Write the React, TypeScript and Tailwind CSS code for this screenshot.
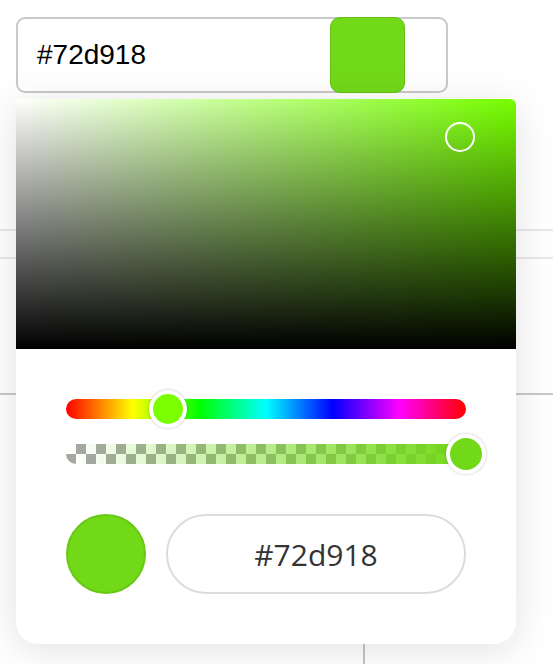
import { useState } from "react";

// Hue slider / alpha slider values for #72d918
const HUE_THUMB_LEFT = 83;

function ColorPopover({ color }: { color: string }) {
  return (
    <div className="absolute left-[16px] top-[99px] w-[500px] h-[545px] bg-white rounded-b-[22px] rounded-tr-[6px] shadow-[0_6px_40px_rgba(0,0,0,0.12)]">
      {/* saturation / value area */}
      <div className="relative h-[250px] rounded-tr-[6px] [background:linear-gradient(to_top,#000,transparent),linear-gradient(to_right,#fff,#77ff00)]">
        <div className="absolute left-[429px] top-[23px] w-[30px] h-[30px] rounded-full border-2 border-white" />
      </div>

      <div className="px-[50px] pt-[50px]">
        {/* hue */}
        <div className="relative h-[20px] w-[400px] rounded-full bg-[linear-gradient(to_right,#ff0000,#ffff00,#00ff00,#00ffff,#0000ff,#ff00ff,#ff0000)]">
          <div
            className="absolute top-[-9px] w-[38px] h-[38px] rounded-full bg-[#7bff00] border-4 border-white shadow-[0_0_3px_rgba(0,0,0,0.25)]"
            style={{ left: HUE_THUMB_LEFT }}
          />
        </div>

        {/* alpha */}
        <div className="relative mt-[25px] h-[20px] w-[400px] rounded-full [background:linear-gradient(to_right,rgba(114,217,24,0),#72d918),repeating-conic-gradient(#a6a6a6_0_25%,#fff_0_50%)_0_0/20px_20px]">
          <div className="absolute left-[380px] top-[-10px] w-[40px] h-[40px] rounded-full bg-[#72d918] border-4 border-white shadow-[0_0_3px_rgba(0,0,0,0.25)]" />
        </div>

        {/* preview + hex field */}
        <div className="flex items-center mt-[50px]">
          <div className="w-[80px] h-[80px] rounded-full bg-[#72d918] border-2 border-[#68c816]" />
          <div className="ml-[20px] w-[300px] h-[80px] rounded-full border-2 border-[#dcdcdc] flex items-center justify-center text-[30px] text-[#333] font-['Open_Sans',sans-serif]">
            {color}
          </div>
        </div>
      </div>
    </div>
  );
}

export default function App() {
  const [color] = useState("#72d918");

  return (
    <div className="relative w-[553px] h-[664px] overflow-hidden bg-white font-['Liberation_Sans',Arial,sans-serif]">
      {/* trigger input */}
      <div className="ml-[16px] mt-[17px] w-[432px] h-[76px] border-2 border-[#c9c9c9] rounded-[9px] flex items-center">
        <span className="pl-[19px] text-[28px] text-black">{color}</span>
        <div className="ml-auto mr-[41px] -my-[2px] w-[75px] h-[76px] rounded-[10px] bg-[#72d918] border border-[#63bf14]" />
      </div>

      {/* page content behind the popover */}
      <div className="mt-[136px] h-[2px] bg-[#e8e8e8]" />
      <div className="mt-[26px] h-[2px] bg-[#e8e8e8]" />
      <div className="mt-[134px] h-[2px] bg-[#c8c8c8]" />
      <div className="ml-[363px] w-[2px] h-[300px] bg-[#c4c4c4]" />

      <ColorPopover color={color} />
    </div>
  );
}
